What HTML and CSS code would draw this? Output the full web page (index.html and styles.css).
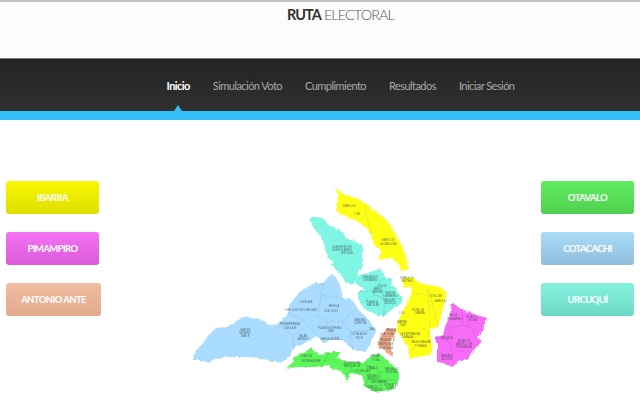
FILE: index.html
```html
<!DOCTYPE html>
<html lang="es">
<head>
    <meta charset="UTF-8">
    <meta name="viewport" content="width=device-width, initial-scale=1.0">
    <title>Ruta Electoral</title>
    <link rel="stylesheet" href="styles.css">
</head>
<body>
    <header class="top">
        <h1><b>RUTA</b> ELECTORAL</h1>
    </header>
    <nav class="nav">
        <a class="active" href="#">Inicio</a>
        <a href="#">Simulación Voto</a>
        <a href="#">Cumplimiento</a>
        <a href="#">Resultados</a>
        <a href="#">Iniciar Sesión</a>
    </nav>
    <div class="nav-line"></div>

    <main class="content">
        <div class="buttons left">
            <a class="btn ibarra" href="#">IBARRA</a>
            <a class="btn pimampiro" href="#">PIMAMPIRO</a>
            <a class="btn ante" href="#">ANTONIO ANTE</a>
        </div>

        <!-- el viewBox usa las coordenadas de la pagina -->
        <svg class="map" viewBox="101 181 440 215" aria-label="Mapa de Imbabura">
            <defs>
                <filter id="rough" x="-5%" y="-5%" width="110%" height="110%" color-interpolation-filters="sRGB">
                    <feTurbulence type="fractalNoise" baseFrequency="0.25" numOctaves="2" seed="4"/>
                    <feDisplacementMap in="SourceGraphic" scale="3.5" xChannelSelector="R" yChannelSelector="G"/>
                    <feGaussianBlur stdDeviation="0.3"/>
                </filter>
            </defs>
            <g filter="url(#rough)">
                <g class="r-blue">
                    <polygon points="193,354 200,347 207,337 215,328 227,327 243,317 260,319 268,325 277,324 288,313 290,303 302,290 315,283 323,283 332,274 337,278 340,285 343,298 353,300 357,308 367,318 376,330 366,352 353,350 343,340 330,340 323,343 317,335 308,342 293,348 290,357 280,363 268,360 250,357 230,357 217,358 208,363 200,360 194,360"/>
                    <path d="M277,324 L293,335 L293,348 M293,335 L308,325 L317,335 M288,313 L300,318 L308,325 M323,283 L321,295 L338,298 L343,298 M321,295 L318,315 L328,322 L343,322 L357,308 M328,322 L326,332 L343,340 M343,322 L350,332 L376,330 M350,332 L353,350 M308,325 L318,315"/>
                </g>
                <g class="r-yellow">
                    <polygon points="335,187 345,195 357,198 365,204 377,212 387,220 393,230 398,238 407,258 408,270 402,270 398,263 390,258 378,260 382,252 373,243 372,235 363,225 350,218 337,212 337,203 338,195"/>
                    <polygon points="403,278 412,277 415,278 417,282 427,285 440,287 447,292 443,308 438,327 430,328 432,350 430,355 417,357 410,359 408,347 402,338 398,332 397,323 405,308 412,292 411,287 403,287"/>
                    <path d="M365,204 L367,218 L372,235 M412,292 L420,295 L428,288 L433,305 L438,327 M428,288 L430,328 M405,320 L397,323 M402,338 L418,337 L420,328 L428,330 L430,342 L418,342 L412,350 M411,287 L415,280"/>
                </g>
                <g class="r-aqua">
                    <polygon points="310,218 323,218 328,225 340,230 347,238 362,245 363,258 362,265 353,285 347,283 340,273 330,263 333,264 327,255 322,238 313,227"/>
                    <polygon points="355,277 370,272 380,269 385,277 393,278 391,285 395,287 402,298 402,303 393,308 383,317 373,313 363,307 358,298 358,292 365,290 355,283"/>
                    <path d="M358,292 L372,292 L380,283 L385,277 M365,300 L375,295 L390,300 L402,298 M375,295 L372,288 M383,317 L385,304 L393,300"/>
                </g>
                <g class="r-salmon">
                    <polygon points="387,329 397,328 395,335 390,340 393,357 385,352 378,345 381,335"/>
                    <path d="M381,337 L394,336 M380,344 L391,345"/>
                </g>
                <g class="r-magenta">
                    <polygon points="452,302 462,310 477,315 487,318 482,332 477,338 482,341 472,352 467,360 458,362 452,367 443,363 437,362 437,345 435,338 443,335 445,327 450,315"/>
                    <path d="M462,310 L462,325 L450,328 L448,340 L452,350 L470,352 M462,325 L470,327 L477,338 M448,340 L435,338"/>
                </g>
                <g class="r-green">
                    <polygon points="287,368 293,362 295,357 305,352 312,347 315,352 322,355 328,352 340,352 337,358 348,362 363,362 370,357 378,353 385,358 392,365 398,372 398,382 392,390 375,392 365,387 362,375 350,373 347,382 345,375 340,370 330,368 330,365 313,367 297,367"/>
                    <path d="M330,352 L322,365 M348,362 L352,370 L362,375 M363,362 L372,368 L380,372 L395,372 M372,368 L365,385 M380,372 L380,390 M352,370 L345,375 M380,380 L396,380"/>
                </g>
            </g>
            <g class="labels">
                <text x="245" y="331">GARCÍA</text><text x="245" y="334">MORENO</text><text x="245" y="337">TANILE</text>
                <text x="306" y="303">CUELLAJE</text><text x="301" y="311">6 DE JULIO DE CUELLAJE</text>
                <text x="290" y="325">PEÑAHERRERA</text><text x="290" y="329">CUELLAJE</text>
                <text x="303" y="337">VACAS</text><text x="303" y="340">GALINDO</text>
                <text x="334" y="307">APUELA</text><text x="331" y="312">6 DE JULIO</text>
                <text x="330" y="329">PLAZA GUTIÉRREZ</text><text x="331" y="332">SAN</text>
                <text x="330" y="340">GARCÍA MOREL</text>
                <text x="360" y="321">IMANTAG</text><text x="360" y="324">QUIROGA</text>
                <text x="359" y="335">COTACACHI</text><text x="359" y="339">TECH</text>
                <text x="372" y="330">SAN</text>
                <text x="342" y="248">LA MERCED DE</text><text x="342" y="251">BUENOS AIRES</text><text x="347" y="254">ANTIGUA</text>
                <text x="370" y="278">CAHUASQUÍ</text><text x="370" y="281">TUMBABIRO</text>
                <text x="382" y="287">CIVILIS</text><text x="378" y="290">PABLO</text><text x="378" y="293">ARENAS</text>
                <text x="390" y="294">IMBUYA</text><text x="390" y="297">TUMBABIRO</text>
                <text x="372" y="303">PLAZA LA</text><text x="373" y="306">SAN BLAS</text>
                <text x="389" y="301">SAN LUIS</text><text x="390" y="304">URCUQUÍ</text>
                <text x="349" y="207">SIMBOLOS</text><text x="357" y="215">LITA</text>
                <text x="388" y="241">SIMBOLOS</text><text x="388" y="245">LA CAROLINA</text>
                <text x="407" y="279">SIMBOLOS</text><text x="407" y="282">SALINAS</text>
                <text x="436" y="297">CONCLAR</text><text x="441" y="302">AMBUQUÍ</text>
                <text x="418" y="311">ESTAT LA</text><text x="420" y="314">IBARRA</text>
                <text x="402" y="314">LOS</text><text x="402" y="323">IBARRA</text><text x="403" y="326">SAN</text>
                <text x="410" y="335">LA ESPERANZA</text><text x="407" y="338">TUMBAJA</text>
                <text x="421" y="343">ANGOCHAGUA</text><text x="421" y="347">TUMBAJE</text>
                <text x="453" y="316">BELLA</text><text x="455" y="320">PIMAMPIRO</text>
                <text x="472" y="318">ESTAT DE</text><text x="472" y="321">CHUGÁ</text>
                <text x="447" y="339">IMPULSA</text>
                <text x="464" y="342">ESTAT DE</text><text x="464" y="345">SAN FCO. DE</text><text x="464" y="348">SIGSIPAMBA</text>
                <text x="447" y="357">MARIANO</text><text x="447" y="360">ACOSTA</text>
                <text x="391" y="331">IMBAYA</text><text x="387" y="335">CHALTURA</text>
                <text x="387" y="341">NATABUELA</text><text x="386" y="345">SAN ROQUE</text><text x="386" y="349">ATUNTAQUI</text>
                <text x="306" y="357">TUMILCA</text><text x="311" y="362">SELVA ALEGRE</text>
                <text x="375" y="357">ILUMÁN</text><text x="376" y="361">TOTAL</text>
                <text x="352" y="364">QUICHINCHE</text><text x="352" y="367">SAN JOSÉ DE</text>
                <text x="372" y="369">OTAVALO</text><text x="363" y="372">ITUMILLAS</text>
                <text x="392" y="370">SAN PABLO</text><text x="392" y="373">ILITTLAS</text>
                <text x="373" y="377">EUGENIO</text><text x="373" y="380">ESPEJO</text>
                <text x="379" y="383">SAN RAFAEL</text><text x="391" y="386">GONZÁLEZ</text><text x="391" y="389">SUÁREZ</text>
                <text x="372" y="388">PATAQUÍ</text><text x="376" y="391">TOCAGÓN</text>
            </g>
        </svg>

        <div class="buttons">
            <a class="btn otavalo" href="#">OTAVALO</a>
            <a class="btn cotacachi" href="#">COTACACHI</a>
            <a class="btn urcuqui" href="#">URCUQUÍ</a>
        </div>
    </main>
</body>
</html>
```
FILE: styles.css
```css
html, body {
    margin: 0;
    height: 100%;
    overflow: hidden;
}
body {
    font-family: "Lato", "Liberation Sans", sans-serif;
    background-color: #ffffff;
}
.top {
    height: 56px;
    border-top: 2px solid #c4c4c4;
    background-color: #fcfcfc;
    text-align: center;
}
.top h1 {
    margin: 0 0 0 41px;
    padding-top: 3px;
    font-size: 14.5px;
    line-height: 20px;
    font-weight: 300;
    letter-spacing: -0.95px;
    color: #555555;
}
.top b {
    font-weight: 700;
    color: #333333;
}
.nav {
    height: 53px;
    padding-left: 41px;
    display: flex;
    justify-content: center;
    align-items: center;
    gap: 23px;
    border-top: 1px solid #777777;
    box-sizing: border-box;
    background: linear-gradient(#232323, #303030);
}
.nav a {
    position: relative;
    font-size: 11px;
    letter-spacing: -0.55px;
    color: #a8a8a8;
    text-decoration: none;
}
.nav a.active {
    color: #ffffff;
    font-weight: 700;
}
.nav a.active::after {
    content: "";
    position: absolute;
    left: 50%;
    bottom: -19px;
    margin-left: -4px;
    border-left: 4px solid transparent;
    border-right: 4px solid transparent;
    border-bottom: 6px solid #35bdf8;
}
.nav-line {
    height: 9px;
    background-color: #35bdf8;
}
.content {
    display: flex;
    align-items: flex-start;
    padding: 61px 6px 0;
}
.buttons {
    display: flex;
    flex-direction: column;
    gap: 18px;
    flex: 0 0 93px;
}
.buttons.left {
    flex-basis: 95px;
    align-items: flex-start;
}
.btn {
    width: 93px;
    height: 33px;
    border-radius: 3px;
    font-size: 9.5px;
    font-weight: 700;
    letter-spacing: -0.6px;
    line-height: 33px;
    text-align: center;
    color: #ffffff;
    text-decoration: none;
}
.btn.ante { width: 95px; }
.ibarra { background: linear-gradient(#f8f800, #dede00); }
.pimampiro { background: linear-gradient(#f671f6, #d95cd9); }
.ante { background: linear-gradient(#f1bca1, #e2aa8d); }
.otavalo { background: linear-gradient(#62ec62, #4fd04f); }
.cotacachi { background: linear-gradient(#a9dcf9, #8fbddb); }
.urcuqui { background: linear-gradient(#82f1dd, #6ddac7); }
.map {
    flex: 0 0 440px;
    height: 215px;
}
.r-blue polygon { fill: #a9dcff; }
.r-blue path { stroke: #8ab6dc; }
.r-yellow polygon { fill: #ffff14; }
.r-yellow path { stroke: #c4c44a; }
.r-aqua polygon { fill: #7ff5e3; }
.r-aqua path { stroke: #6cbdb2; }
.r-salmon polygon { fill: #f0a987; }
.r-salmon path { stroke: #c08a6e; }
.r-magenta polygon { fill: #f76cf7; }
.r-magenta path { stroke: #c458c4; }
.r-green polygon { fill: #5cf55c; }
.r-green path { stroke: #3fae3f; }
.map path {
    fill: none;
    stroke-width: 0.45;
}
.labels text {
    font-family: "Liberation Sans", sans-serif;
    font-size: 2.6px;
    text-anchor: middle;
    fill: #2a3a3a;
    opacity: 0.7;
}
```
